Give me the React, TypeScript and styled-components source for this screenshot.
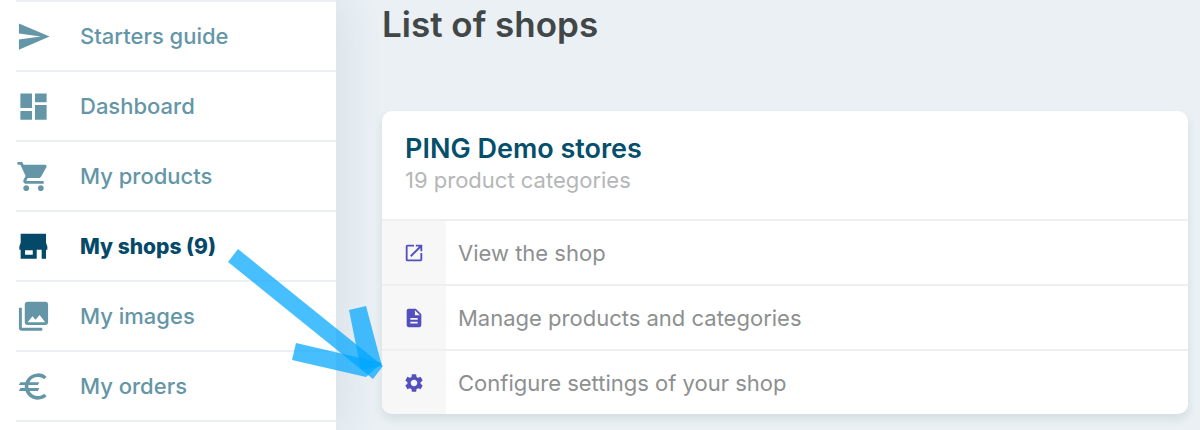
import React from "react";
import styled, { createGlobalStyle } from "styled-components";
import { MdSend, MdDashboard, MdShoppingCart, MdEuro, MdOpenInNew, MdSettings } from "react-icons/md";

const GlobalStyle = createGlobalStyle`
  * { box-sizing: border-box; }
  body {
    margin: 0;
    background: #eaf0f4;
    font-family: Inter, "Open Sans", sans-serif;
    overflow-x: hidden;
  }
`;

const Page = styled.div`
  position: relative;
  display: flex;
  min-height: 100vh;
`;

const Sidebar = styled.nav`
  flex: 0 0 336px;
  padding-left: 16px;
  background: #ffffff;
  box-shadow: 0 0 44px rgba(40, 90, 120, 0.13);
`;

const NavList = styled.ul`
  margin: 0;
  padding: 0;
  list-style: none;
  border-top: 2px solid #ebf0f4;
`;

const NavItem = styled.li`
  height: 70px;
  border-bottom: 2px solid #ebf0f4;
`;

const NavLink = styled.a<{ $active?: boolean }>`
  display: flex;
  align-items: center;
  gap: 29px;
  height: 100%;
  color: ${(p) => (p.$active ? "#044a68" : "#6496a7")};
  font-size: ${(p) => (p.$active ? "21px" : "22px")};
  font-weight: ${(p) => (p.$active ? 800 : 500)};
  text-decoration: none;

  svg {
    width: 35px;
    height: 35px;
  }
`;

const Main = styled.main`
  flex: 1;
  min-width: 0;
  padding: 0 12px 16px 46px;
`;

const Title = styled.h1`
  margin: 0;
  padding-top: 2px;
  height: 111px;
  color: #414747;
  font-size: 35px;
  line-height: 44px;
  font-weight: 600;
`;

const Card = styled.section`
  overflow: hidden;
  border-radius: 10px;
  background: #ffffff;
  box-shadow: 0 5px 8px rgba(60, 90, 100, 0.12);
`;

const CardHeader = styled.header`
  padding: 21px 23px 25px;
`;

const CardTitle = styled.h2`
  margin: 0;
  color: #044f6b;
  font-size: 27px;
  line-height: 34px;
  font-weight: 600;
`;

const CardNote = styled.p`
  margin: 0;
  color: #b4b7b7;
  font-size: 22px;
  line-height: 28px;
`;

const ActionList = styled.ul`
  margin: 0;
  padding: 0;
  list-style: none;
`;

const Action = styled.li`
  border-top: 2px solid #eeeff0;
`;

const ActionLink = styled.a`
  display: flex;
  align-items: center;
  gap: 12px;
  height: 63px;
  color: #8d9090;
  font-size: 22px;
  text-decoration: none;
`;

const ActionIcon = styled.span`
  display: flex;
  align-items: center;
  justify-content: center;
  width: 64px;
  height: 100%;
  background: #f7f7f8;
  color: #5350bd;

  svg {
    width: 22px;
    height: 22px;
  }
`;

const Arrow = styled.svg`
  position: absolute;
  top: 240px;
  left: 220px;
  width: 170px;
  height: 150px;
  pointer-events: none;
`;

const StoreIcon = () => (
  <svg viewBox="0 0 24 24" fill="currentColor" aria-hidden="true">
    <path
      d="M3.2 3.300H20.600V9.500L21.500 12V14.200H20.600V20.400H17.600V14.200H14.200V20.400H3.200V14.200H2.300V12L3.200 9.500zM6.200 14.500V17.600H11.500V14.500z"
      fillRule="evenodd"
    />
  </svg>
);

const ImagesIcon = () => (
  <svg viewBox="0 0 24 24" fill="currentColor" aria-hidden="true">
    <path
      d="M8 1.800h12a2 2 0 0 1 2 2v12a2 2 0 0 1-2 2H8a2 2 0 0 1-2-2v-12a2 2 0 0 1 2-2zM8 16h12L16.200 11l-2.800 3.200L11.300 11.800z"
      fillRule="evenodd"
    />
    <path d="M2 6v13.700a2 2 0 0 0 2 2h14v-2H4V6z" />
  </svg>
);

const PageIcon = () => (
  <svg viewBox="0 0 24 24" fill="currentColor" aria-hidden="true">
    <path d="M14 2H6a2 2 0 0 0-2 2v16a2 2 0 0 0 2 2h12a2 2 0 0 0 2-2V8zm2 16H8v-2h8zm0-4H8v-2h8zm-3-5V3.500L18.500 9z" />
  </svg>
);

const navItems = [
  { label: "Starters guide", icon: <MdSend /> },
  { label: "Dashboard", icon: <MdDashboard /> },
  { label: "My products", icon: <MdShoppingCart /> },
  { label: "My shops (9)", icon: <StoreIcon />, active: true },
  { label: "My images", icon: <ImagesIcon /> },
  { label: "My orders", icon: <MdEuro /> },
];

const actions = [
  { label: "View the shop", icon: <MdOpenInNew /> },
  { label: "Manage products and categories", icon: <PageIcon /> },
  { label: "Configure settings of your shop", icon: <MdSettings /> },
];

export default function App() {
  return (
    <>
      <GlobalStyle />
      <Page>
        <Sidebar>
          <NavList>
            {navItems.map((item) => (
              <NavItem key={item.label}>
                <NavLink href="#" $active={item.active} aria-current={item.active ? "page" : undefined}>
                  {item.icon}
                  {item.label}
                </NavLink>
              </NavItem>
            ))}
          </NavList>
        </Sidebar>
        <Main>
          <Title>List of shops</Title>
          <Card>
            <CardHeader>
              <CardTitle>PING Demo stores</CardTitle>
              <CardNote>19 product categories</CardNote>
            </CardHeader>
            <ActionList>
              {actions.map((action) => (
                <Action key={action.label}>
                  <ActionLink href="#">
                    <ActionIcon>{action.icon}</ActionIcon>
                    {action.label}
                  </ActionLink>
                </Action>
              ))}
            </ActionList>
          </Card>
        </Main>
        <Arrow viewBox="220 240 170 150" aria-hidden="true">
          <g fill="#00a6ff" fillOpacity="0.72">
            <path d="M238 249L383 366L373 379L228 262Z" />
            <path d="M349 310L366 306L382 366L361 370Z" />
            <path d="M296 343L382 363L366 377L292 360Z" />
          </g>
        </Arrow>
      </Page>
    </>
  );
}
